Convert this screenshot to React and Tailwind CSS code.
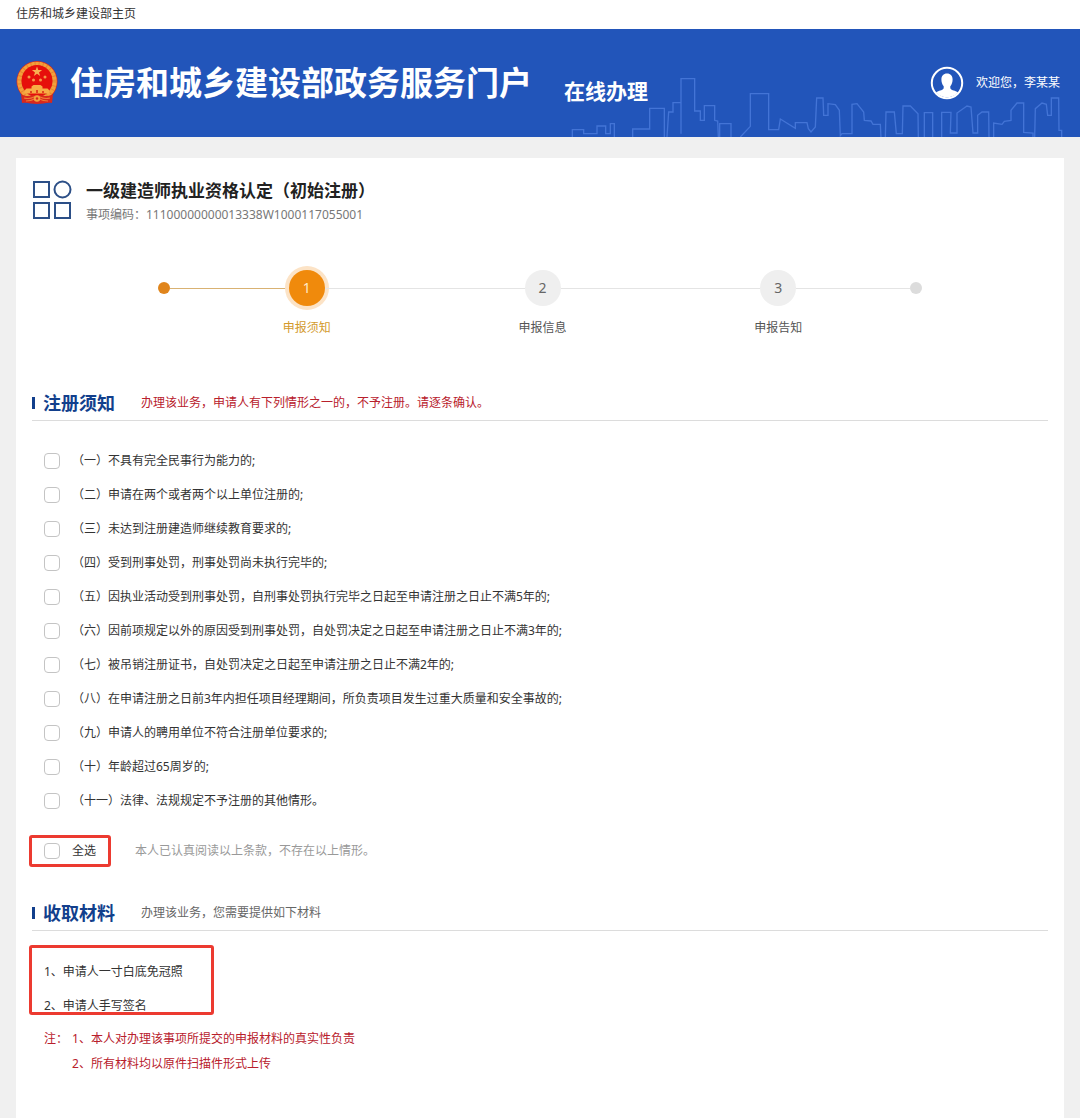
import React, { useState } from "react";

const conditions = [
  "（一）不具有完全民事行为能力的;",
  "（二）申请在两个或者两个以上单位注册的;",
  "（三）未达到注册建造师继续教育要求的;",
  "（四）受到刑事处罚，刑事处罚尚未执行完毕的;",
  "（五）因执业活动受到刑事处罚，自刑事处罚执行完毕之日起至申请注册之日止不满5年的;",
  "（六）因前项规定以外的原因受到刑事处罚，自处罚决定之日起至申请注册之日止不满3年的;",
  "（七）被吊销注册证书，自处罚决定之日起至申请注册之日止不满2年的;",
  "（八）在申请注册之日前3年内担任项目经理期间，所负责项目发生过重大质量和安全事故的;",
  "（九）申请人的聘用单位不符合注册单位要求的;",
  "（十）年龄超过65周岁的;",
  "（十一）法律、法规规定不予注册的其他情形。",
];

function Emblem() {
  return (
    <svg viewBox="0 0 42 46" className="h-[46px] w-[42px] shrink-0" aria-hidden="true">
      <circle cx="21" cy="21.5" r="20.5" fill="#d9281c" />
      <circle cx="21" cy="21.5" r="17.6" fill="none" stroke="#f3a13a" strokeWidth="4.4" />
      <circle cx="21" cy="21.5" r="17.6" fill="none" stroke="#e0702a" strokeWidth="4.4" strokeDasharray="1 3" opacity=".6" />
      <circle cx="21" cy="20.5" r="15.4" fill="#e60f0b" />
      <path d="M21 6.5l1.3 3.6h3.8l-3.1 2.3 1.2 3.6-3.2-2.2-3.2 2.2 1.2-3.6-3.1-2.3h3.8z" fill="#f9b052" />
      <g fill="#f59a48">
        <circle cx="13" cy="17" r="1.5" />
        <circle cx="17.5" cy="20" r="1.5" />
        <circle cx="24.5" cy="20" r="1.5" />
        <circle cx="29" cy="17" r="1.5" />
      </g>
      <path d="M15.5 26.5l2-1.5h7l2 1.5v2h5l2 2v3h-25v-3l2-2h5z" fill="#f7ac45" />
      <path d="M14 31h2v2h-2zM20 30h2v3h-2zM26 31h2v2h-2z" fill="#e0461f" />
      <path d="M5 34c4 3 10 2 13 1h6c3 1 9 2 13-1l-1 9c-5-1-9 1-15 1s-10-2-15-1z" fill="#d9281c" />
      <path d="M8 38c4 1 8 0 10-1h6c2 1 6 2 10 1M10 41c4 0 7-1 11-3 4 2 7 3 11 3" fill="none" stroke="#ee7d33" strokeWidth="1.2" />
      <circle cx="21" cy="38.5" r="3.2" fill="#f3a13a" />
      <circle cx="21" cy="38.5" r="1.2" fill="#d9281c" />
    </svg>
  );
}

function Skyline() {
  return (
    <svg
      viewBox="30 20 1480 180"
      className="absolute right-4 bottom-0 h-[60px] w-[494px]"
      fill="none"
      stroke="#4374d6"
      strokeWidth="4"
      aria-hidden="true"
    >
      <path d="M36 200V178H70V190H110V167H136V190H150V160H162V200M217 200V176H268V114H312V200M320 200L325 125H338V97H362V190V25H403V122H420V150H432V106H463V150L472 152L474 200M478 200V160H512V200M540 200L570 168V70H625V178H655L660 146L705 174V157H740L744 175L752 185L765 170L769 83H788L790 135H803V100L825 103L837 120L840 196L845 190H875V102L890 100L910 125L912 150L932 152L938 162H960L962 202" />
      <path
        transform="translate(420 -60)"
        d="M555 262L557 185H582L588 250H606L608 167H630L653 190L654 262M672 262V187H697V262M724 262V186H752L750 248H770V188L800 167L812 170L818 248H832V195L845 185H865L866 262M880 262V218L905 222L912 213L932 210V180L950 158H970V246L998 248V262M1003 262L1005 175L1025 158L1038 162L1042 195H1053V143H1075L1076 240H1084V262"
      />
    </svg>
  );
}

function Avatar() {
  return (
    <svg viewBox="0 0 34 34" className="size-[34px]" aria-hidden="true">
      <circle cx="17" cy="17" r="15.2" fill="none" stroke="#fff" strokeWidth="2" />
      <path
        d="M17 7.5c3.6 0 5.6 2.4 5.6 6 0 2.900-.9 5.200-2.300 6.700v2.600c0 1.500 2.700 2.300 5.500 3.700a14 14 0 0 1-17.600 0c2.800-1.400 5.500-2.200 5.500-3.700v-2.600c-1.400-1.500-2.300-3.800-2.300-6.700 0-3.600 2-6 5.600-6z"
        fill="#fff"
      />
      <path d="M6 26.500c3-2.500 6-1.500 7.700-4h6.600c1.700 2.500 4.700 1.500 7.700 4a15 15 0 0 1-22 0z" fill="#fff" />
    </svg>
  );
}

function Check({ id, checked, onChange }) {
  return (
    <input
      id={id}
      type="checkbox"
      checked={checked}
      onChange={onChange}
      className="size-4 shrink-0 appearance-none rounded-[4px] border border-[#c4c4c4] bg-white checked:border-[#1d4fb8] checked:bg-[#1d4fb8]"
    />
  );
}

function Step({ number, label, active }) {
  return (
    <li className="flex w-9 shrink-0 flex-col items-center">
      <span
        className={
          active
            ? "flex size-9 items-center justify-center rounded-full bg-[#f08a0c] text-sm text-[#ffe9c9] ring-4 ring-[#fce3c6]"
            : "flex size-9 items-center justify-center rounded-full bg-[#efefef] text-sm text-[#666]"
        }
      >
        {number}
      </span>
      <span className={active ? "mt-3 whitespace-nowrap leading-5 text-[#d39a2c]" : "mt-3 whitespace-nowrap leading-5 text-[#555]"}>
        {label}
      </span>
    </li>
  );
}

function SectionHead({ title, children }) {
  return (
    <div className="flex h-9 items-center border-b border-[#dcdcdc]">
      <span className="mr-2 h-3 w-[3px] bg-[#123f8c]" />
      <h2 className="mr-[26px] text-lg leading-6 font-bold text-[#123f8c]">{title}</h2>
      {children}
    </div>
  );
}

export default function App() {
  const [checked, setChecked] = useState(conditions.map(() => false));
  const all = checked.every(Boolean);
  const toggle = (i) => setChecked(checked.map((c, j) => (j === i ? !c : c)));

  return (
    <div className="flex min-h-screen flex-col bg-[#f0f0f0] font-['Noto_Sans','Noto_Sans_CJK_SC',sans-serif] text-xs text-[#333]">
      <nav className="flex h-[29px] items-center bg-white px-4 pb-[2px]">
        <a href="#home">住房和城乡建设部主页</a>
      </nav>

      <header className="relative flex h-[108px] items-center bg-[#2255ba] pr-5 pl-4 text-white">
        <Skyline />
        <Emblem />
        <h1 className="ml-3 text-[33px] leading-10 font-bold whitespace-nowrap">住房和城乡建设部政务服务门户</h1>
        <span className="mt-4 ml-8 text-[21px] leading-8 font-bold whitespace-nowrap">在线办理</span>
        <div className="relative ml-auto flex items-center gap-3 whitespace-nowrap">
          <Avatar />
          <span>欢迎您，李某某</span>
        </div>
      </header>

      <main className="mx-4 mt-[21px] flex-1 bg-white px-4 pb-10">
        <div className="flex items-start gap-[14px] pt-[21px]">
          <svg viewBox="0 0 40 40" className="size-10" fill="none" stroke="#2c4f87" strokeWidth="2" aria-hidden="true">
            <rect x="2" y="3" width="15" height="15" />
            <circle cx="30.500" cy="10.500" r="8" />
            <rect x="2" y="24" width="15" height="15" />
            <rect x="23" y="24" width="15" height="15" />
          </svg>
          <div>
            <h2 className="text-[17px] leading-6 font-bold text-[#222]">一级建造师执业资格认定（初始注册）</h2>
            <p className="leading-6 text-[#777]">事项编码：11100000000013338W1000117055001</p>
          </div>
        </div>

        <ol className="mx-auto mt-[43px] flex max-w-[764px]">
          <li aria-hidden="true" className="mt-3 size-3 shrink-0 rounded-full bg-[#e0851c]" />
          <li aria-hidden="true" className="mt-[18px] h-px grow-[119] bg-[#d9b273]" />
          <Step number="1" label="申报须知" active />
          <li aria-hidden="true" className="mt-[18px] h-px grow-[200] bg-[#e4e4e4]" />
          <Step number="2" label="申报信息" />
          <li aria-hidden="true" className="mt-[18px] h-px grow-[200] bg-[#e4e4e4]" />
          <Step number="3" label="申报告知" />
          <li aria-hidden="true" className="mt-[18px] h-px grow-[114] bg-[#e4e4e4]" />
          <li aria-hidden="true" className="mt-3 size-3 shrink-0 rounded-full bg-[#dcdcdc]" />
        </ol>

        <section className="mt-[47px]">
          <SectionHead title="注册须知">
            <p className="text-[#b8202c]">办理该业务，申请人有下列情形之一的，不予注册。请逐条确认。</p>
          </SectionHead>
          <ul className="mt-[23px] pl-3">
            {conditions.map((text, i) => (
              <li key={text} className="flex h-[34px] items-center gap-3">
                <Check id={"condition-" + i} checked={checked[i]} onChange={() => toggle(i)} />
                <label htmlFor={"condition-" + i}>{text}</label>
              </li>
            ))}
          </ul>
          <div className="mt-[17px] -ml-[3px] flex items-center gap-6">
            <div className="flex h-8 items-center gap-3 rounded-[3px] border-[3px] border-[#ec3a30] px-3">
              <Check id="all" checked={all} onChange={() => setChecked(conditions.map(() => !all))} />
              <label htmlFor="all">全选</label>
            </div>
            <p className="text-[#999]">本人已认真阅读以上条款，不存在以上情形。</p>
          </div>
        </section>

        <section className="mt-7">
          <SectionHead title="收取材料">
            <p className="text-[#666]">办理该业务，您需要提供如下材料</p>
          </SectionHead>
          <ol className="mt-[14px] -ml-[3px] flex w-[185px] flex-col gap-[22px] rounded-[3px] border-[3px] border-[#ec3a30] pt-[18px] pl-3 leading-3">
            <li>1、申请人一寸白底免冠照</li>
            <li>2、申请人手写签名</li>
          </ol>
          <div className="mt-[11px] flex pl-3 leading-[25px] text-[#b8202c]">
            <span>注：</span>
            <ol className="pl-1">
              <li>1、本人对办理该事项所提交的申报材料的真实性负责</li>
              <li>2、所有材料均以原件扫描件形式上传</li>
            </ol>
          </div>
        </section>
      </main>
    </div>
  );
}
